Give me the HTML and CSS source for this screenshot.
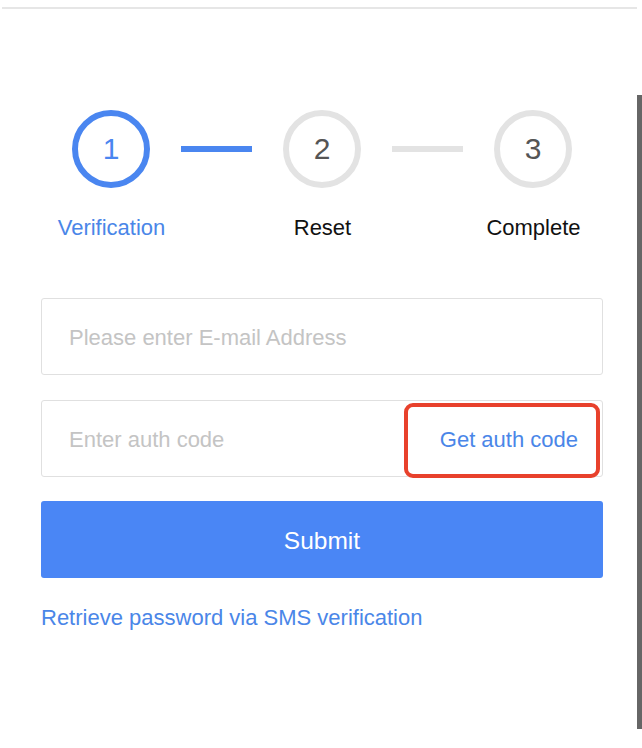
FILE: index.html
```html
<!DOCTYPE html>
<html>
<head>
<meta charset="utf-8">
<link rel="stylesheet" href="styles.css">
</head>
<body>
<div class="topline"></div>
<div class="scrollbar"></div>
<main class="page">
  <div class="steps">
    <div class="circle active">1</div>
    <div class="connector active"></div>
    <div class="circle">2</div>
    <div class="connector"></div>
    <div class="circle">3</div>
  </div>
  <div class="labels">
    <div class="label active">Verification</div>
    <div class="label">Reset</div>
    <div class="label">Complete</div>
  </div>
  <form class="form">
    <div class="field">
      <input class="input" type="text" placeholder="Please enter E-mail Address">
    </div>
    <div class="field code-field">
      <input class="input" type="text" placeholder="Enter auth code">
      <span class="get-code">Get auth code</span>
      <span class="highlight"></span>
    </div>
    <button class="submit" type="button">Submit</button>
    <a class="sms-link" href="#">Retrieve password via SMS verification</a>
  </form>
</main>
</body>
</html>
```

FILE: styles.css
```css
* { box-sizing: border-box; }
html, body { margin: 0; padding: 0; background: #fff; }
body {
  font-family: "Liberation Sans", Arial, sans-serif;
  width: 642px;
  height: 748px;
  position: relative;
  overflow: hidden;
}
.topline {
  margin: 7px 0 0 2px;
  width: 635px;
  height: 2px;
  background: #e6e6e6;
}
.scrollbar {
  position: absolute;
  right: 0;
  top: 95px;
  width: 5px;
  height: 634px;
  background: #666;
}
.page {
  padding: 0 39px 0 41px;
}
.steps {
  display: flex;
  align-items: center;
  gap: 31px;
  margin-top: 101px;
  margin-left: 31px;
}
.circle {
  width: 78px;
  height: 78px;
  border-radius: 50%;
  border: 6px solid #e3e3e3;
  display: flex;
  align-items: center;
  justify-content: center;
  font-size: 30px;
  color: #555;
}
.circle.active {
  border-color: #4a86f0;
  color: #4a86f0;
}
.connector {
  width: 71px;
  height: 6px;
  background: #e3e3e3;
}
.connector.active { background: #4a86f0; }
.labels {
  display: grid;
  grid-template-columns: repeat(3, 211px);
  margin-left: -35px;
  margin-top: 27px;
}
.label {
  text-align: center;
  font-size: 22px;
  line-height: 26px;
  color: #111;
}
.label.active { color: #4a86e8; }
.form {
  display: flex;
  flex-direction: column;
  margin-top: 57px;
}
.field {
  position: relative;
  height: 77px;
  border: 1px solid #e0e0e0;
  border-radius: 3px;
  margin-bottom: 25px;
  display: flex;
  align-items: center;
}
.code-field { margin-bottom: 24px; }
.input {
  flex: 1;
  height: 100%;
  border: none;
  outline: none;
  background: transparent;
  padding: 2px 0 0 27px;
  font-family: "Liberation Sans", Arial, sans-serif;
  font-size: 22px;
  color: #333;
}
.input::placeholder { color: #c4c4c4; }
.get-code {
  font-size: 22px;
  color: #4a86e8;
  margin-right: 24px;
  padding-top: 2px;
  white-space: nowrap;
}
.highlight {
  position: absolute;
  left: 362px;
  top: 2px;
  width: 196px;
  height: 75px;
  border: 4px solid #e8412c;
  border-radius: 9px;
}
.submit {
  height: 77px;
  border: none;
  border-radius: 3px;
  background: #4a86f5;
  color: #fff;
  font-family: "Liberation Sans", Arial, sans-serif;
  font-size: 24.5px;
  padding: 2px 0 0;
}
.sms-link {
  margin-top: 27px;
  font-size: 22px;
  line-height: 26px;
  color: #4a86e8;
  text-decoration: none;
  align-self: flex-start;
}
```
